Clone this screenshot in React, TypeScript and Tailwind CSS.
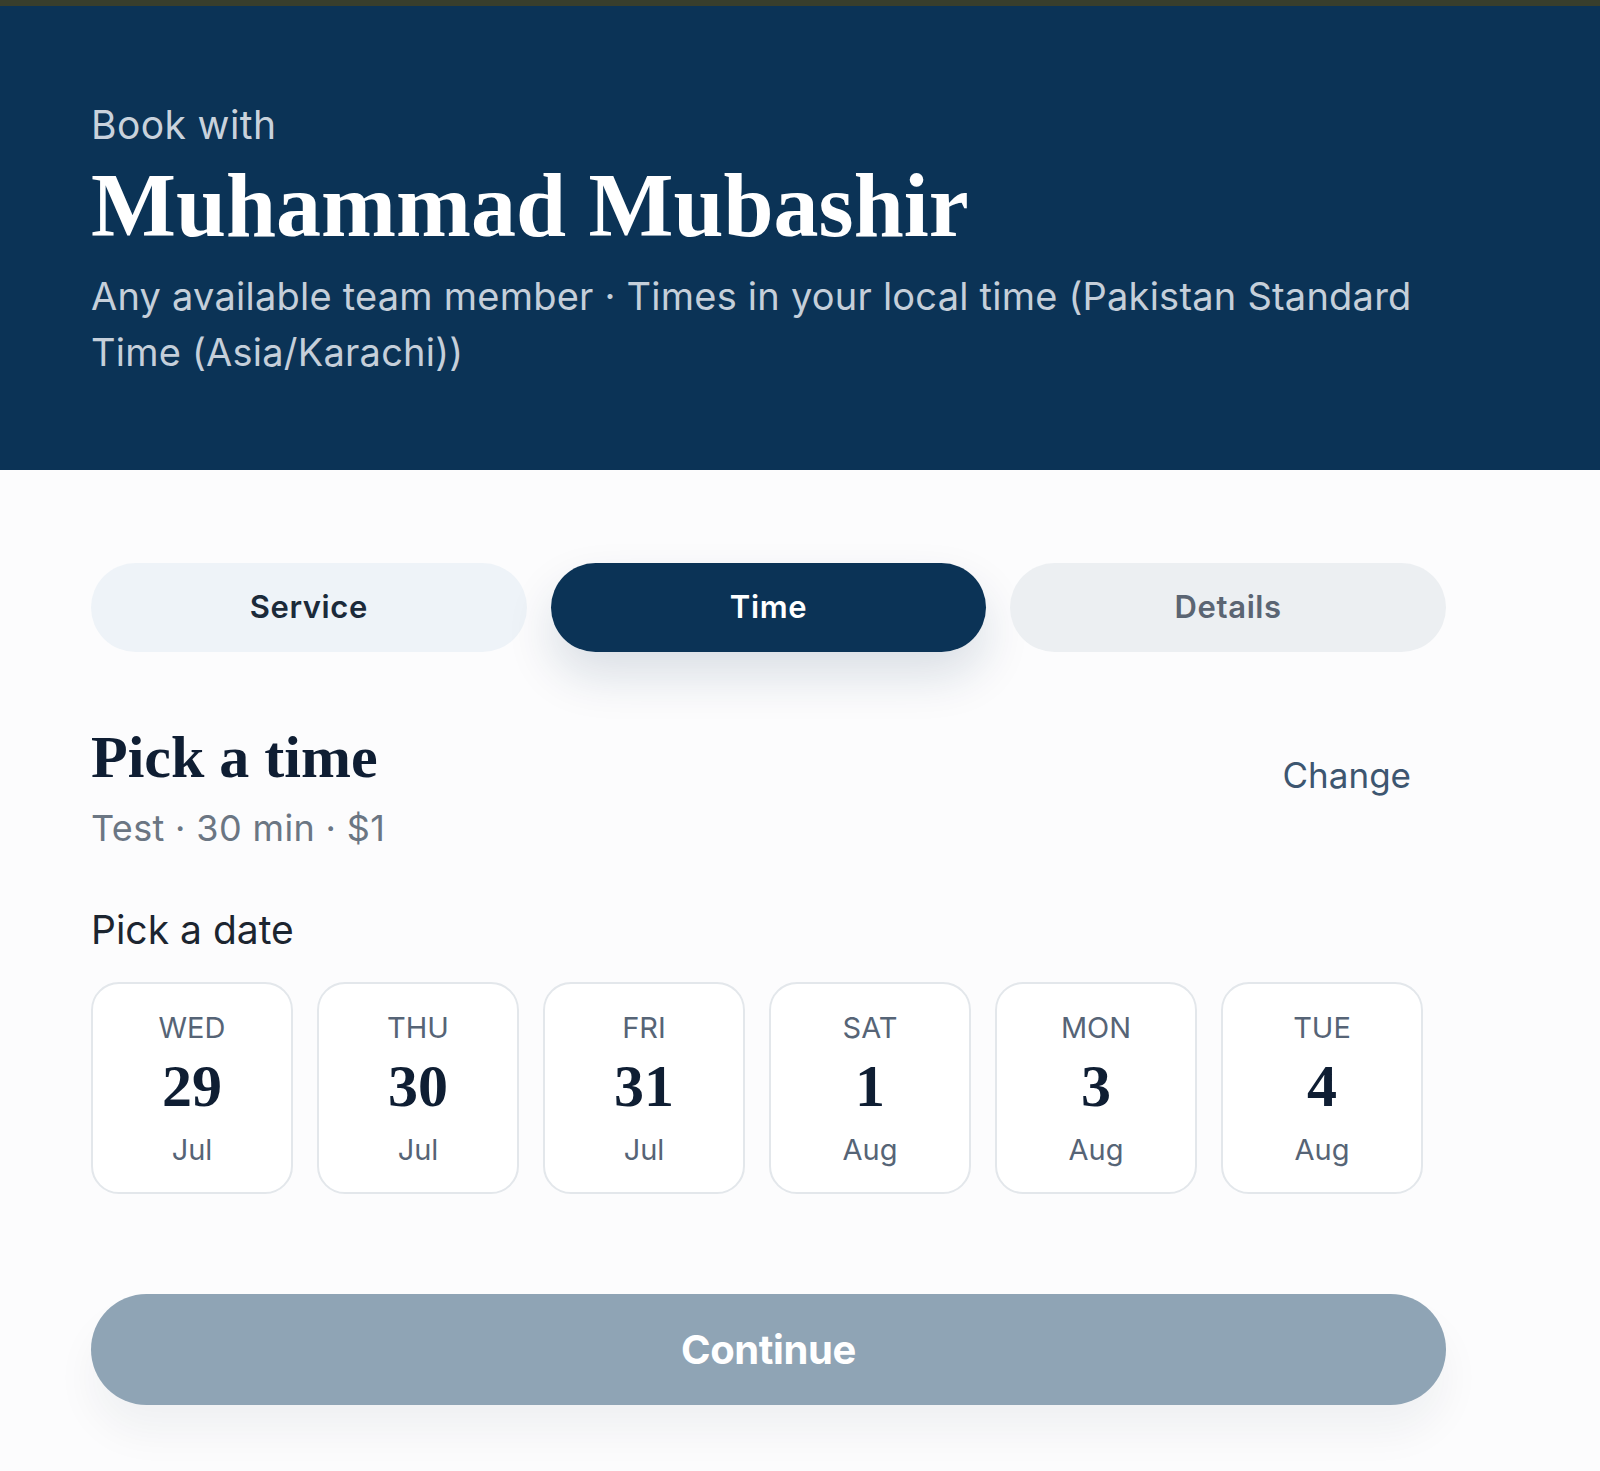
import React from 'react'

type DateOption = { day: string; date: string; month: string }

const dates: DateOption[] = [
  { day: 'WED', date: '29', month: 'Jul' },
  { day: 'THU', date: '30', month: 'Jul' },
  { day: 'FRI', date: '31', month: 'Jul' },
  { day: 'SAT', date: '1', month: 'Aug' },
  { day: 'MON', date: '3', month: 'Aug' },
  { day: 'TUE', date: '4', month: 'Aug' }
]

const sans = "font-['Inter','Noto_Sans',sans-serif]"
const serif = "font-['Liberation_Serif','DejaVu_Serif',serif]"

const DateCard: React.FC<{ option: DateOption }> = ({ option }) => (
  <button className="w-[202px] h-[212px] rounded-[28px] border-2 border-[#e3e7eb] bg-white flex flex-col items-center pt-[24px]">
    <span className="text-[29px] leading-[40px] text-[#566476]">{option.day}</span>
    <span className={`${serif} font-bold text-[60px] leading-[64px] mt-[6px] text-[#0f1e33]`}>{option.date}</span>
    <span className="text-[29px] leading-[40px] text-[#566476] mt-[12px]">{option.month}</span>
  </button>
)

const App: React.FC = (): JSX.Element => {
  return (
    <div className={`${sans} min-h-[1471px] w-full bg-[#fcfcfd]`}>
      <div className="h-[6px] bg-[#383e2c]" />
      <header className="h-[464px] bg-[#0b3356] pl-[91px] pt-[96px]">
        <p className="text-[39px] leading-[46px] tracking-[0.01em] text-[#c9d2dc]">Book with</p>
        <h1 className={`${serif} font-bold text-[90px] leading-[97px] mt-[9px] text-white`}>
          Muhammad Mubashir
        </h1>
        <p className="w-[1355px] text-[38px] leading-[56px] tracking-[0.006em] mt-[14px] text-[#c5cfda]">
          Any available team member · Times in your local time (Pakistan Standard Time (Asia/Karachi))
        </p>
      </header>

      <main className="pl-[91px] w-[1446px]">
        <div className="mt-[93px] grid grid-cols-3 gap-[24px]">
          <button className="h-[89px] rounded-full bg-[#eef3f8] text-[31px] font-semibold tracking-[0.02em] text-[#1b2a3a]">
            Service
          </button>
          <button className="h-[89px] rounded-full bg-[#0b3356] text-[31px] font-semibold tracking-[0.02em] text-white shadow-[0_24px_48px_rgba(11,51,86,0.14)]">
            Time
          </button>
          <button className="h-[89px] rounded-full bg-[#eceff2] text-[31px] font-semibold tracking-[0.02em] text-[#5b6573]">
            Details
          </button>
        </div>

        <div className="mt-[73px] flex items-start justify-between pr-[35px]">
          <div>
            <h2 className={`${serif} font-bold text-[60px] leading-[64px] text-[#0f1e33]`}>Pick a time</h2>
            <p className="mt-[17px] text-[36px] leading-[44px] tracking-[0.01em] text-[#6b7683]">Test · 30 min · $1</p>
          </div>
          <button className="mt-[28px] text-[35px] leading-[44px] text-[#3d5670]">Change</button>
        </div>

        <p className="mt-[58px] text-[39px] leading-[44px] text-[#1c2530]">Pick a date</p>

        <div className="mt-[30px] flex gap-[24px]">
          {dates.map((d) => (
            <DateCard key={d.day} option={d} />
          ))}
        </div>

        <button className="mt-[100px] w-full h-[111px] rounded-full bg-[#8fa4b5] text-white text-[40px] font-bold tracking-[-0.01em] shadow-[0_28px_40px_rgba(15,30,51,0.05)]">
          Continue
        </button>
      </main>
    </div>
  )
}

export default App
